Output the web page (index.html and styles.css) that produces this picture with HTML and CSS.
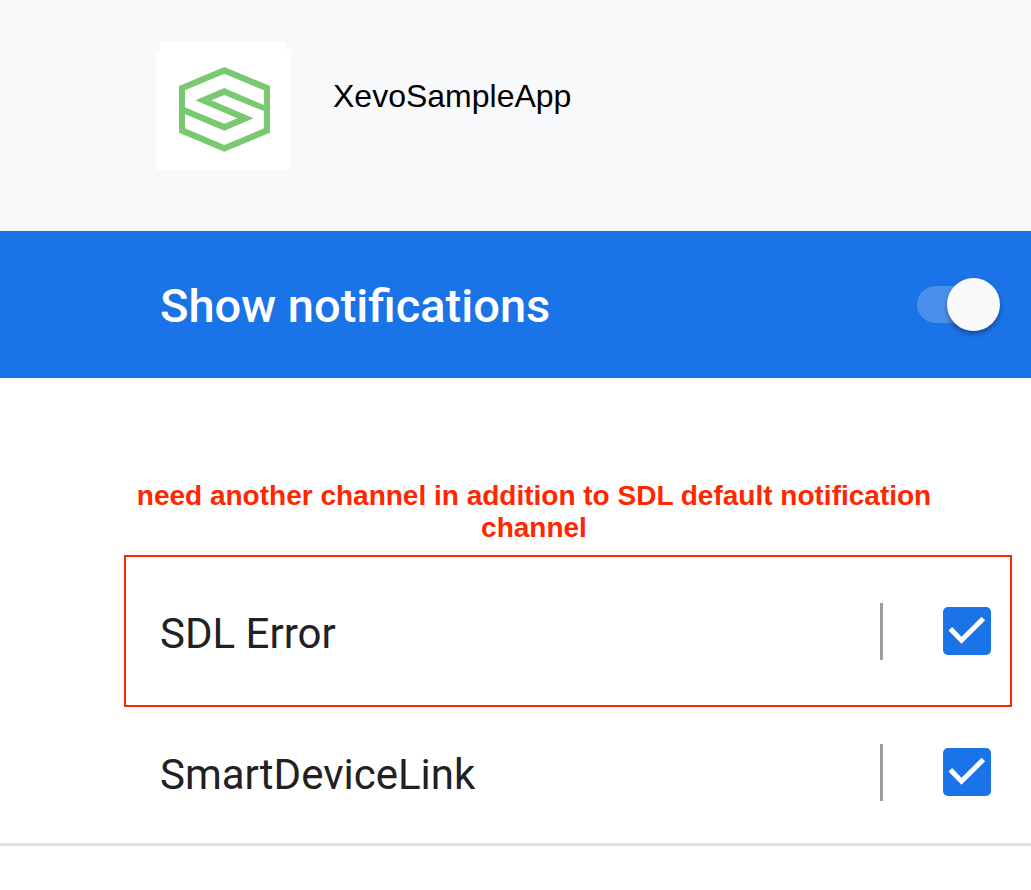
FILE: index.html
```html
<!DOCTYPE html>
<html lang="en">
<head>
<meta charset="utf-8">
<meta name="viewport" content="width=device-width, initial-scale=1">
<title>App notifications</title>
<link rel="stylesheet" href="styles.css">
</head>
<body>
<header class="app-header">
  <svg class="app-logo" viewBox="33 36 405 384" aria-hidden="true">
    <path fill="#fff" d="M45 36H423V60H438V420H33V60H45Z"/>
    <path fill="#78c970" fill-rule="evenodd" d="M238 111L375 168V308L238 365L102 308V168ZM238 131L120 181V295L238 345L357 295V181Z"/>
    <path fill="#78c970" d="M358 226L238 174L151 211L277 265L238 281L119 232V252L238 302L326 265L199 211L238 195L358 244Z"/>
  </svg>
  <h1 class="app-name">XevoSampleApp</h1>
</header>
<main>
  <div class="master">
    <label class="master-label" for="show">Show notifications</label>
    <input class="switch" id="show" type="checkbox" role="switch" checked>
  </div>
  <section class="channels">
    <p class="note">need another channel in addition to SDL default notification channel</p>
    <div class="channel highlighted">
      <label class="channel-label" for="sdl-error">SDL Error</label>
      <span class="divider"></span>
      <span class="check">
        <input class="check-input" id="sdl-error" type="checkbox" checked>
        <svg class="check-mark" viewBox="0 0 48 48" aria-hidden="true"><path fill="none" stroke="#fff" stroke-width="5" d="M7.3 21.8L18.5 33.2L40.4 11.5"/></svg>
      </span>
    </div>
    <div class="channel">
      <label class="channel-label" for="sdl">SmartDeviceLink</label>
      <span class="divider"></span>
      <span class="check">
        <input class="check-input" id="sdl" type="checkbox" checked>
        <svg class="check-mark" viewBox="0 0 48 48" aria-hidden="true"><path fill="none" stroke="#fff" stroke-width="5" d="M7.3 21.8L18.5 33.2L40.4 11.5"/></svg>
      </span>
    </div>
  </section>
</main>
</body>
</html>
```
FILE: styles.css
```css
* {
  box-sizing: border-box;
}

body {
  margin: 0;
  background: #fff;
  color: #212121;
  font-family: Roboto, sans-serif;
}

.app-header {
  display: flex;
  align-items: flex-start;
  gap: 42px;
  padding: 42px 32px 61px 156px;
  background: #f8f9fb;
}

.app-logo {
  flex: none;
  width: 135px;
  height: 128px;
}

.app-name {
  margin: 36px 0 0;
  color: #000;
  font: 400 32px/36px "Liberation Sans", Arial, sans-serif;
}

.master {
  display: flex;
  align-items: center;
  justify-content: space-between;
  padding: 46px 31px 47px 160px;
  background: #1b73e8;
}

.master-label {
  padding-top: 4px;
  color: #fff;
  font-size: 47px;
  font-weight: 500;
  line-height: 50px;
}

.switch {
  appearance: none;
  display: grid;
  align-items: center;
  width: 83px;
  height: 53px;
  margin: 0;
}

.switch::before,
.switch::after {
  content: "";
  grid-area: 1 / 1;
}

.switch::before {
  width: 72px;
  height: 37px;
  border-radius: 19px;
  background: #4990ed;
}

.switch::after {
  justify-self: end;
  width: 53px;
  height: 53px;
  border-radius: 50%;
  background: #fafafa;
  box-shadow: 0 3px 5px rgba(0, 0, 0, 0.35);
}

.channels {
  padding: 102px 19px 0 124px;
  border-bottom: 3px solid #e0e0e0;
}

.note {
  max-width: 820px;
  margin: 0 0 11px;
  color: #ff2600;
  font: 700 28px/32px "Arial Rounded MT Bold", "Liberation Sans", Arial, sans-serif;
  text-align: center;
}

.channel {
  display: flex;
  align-items: center;
  padding: 46px 19px 45px 34px;
  border: 2px solid transparent;
}

.channel + .channel {
  padding-top: 35px;
  padding-bottom: 40px;
}

.highlighted {
  border-color: #ff2600;
}

.channel-label {
  flex: 1;
  padding-top: 4px;
  font-size: 42px;
  line-height: 50px;
}

.divider {
  width: 3px;
  height: 57px;
  margin-right: 60px;
  background: #9e9e9e;
}

.check {
  display: grid;
  padding-bottom: 1px;
}

.check-input,
.check-mark {
  grid-area: 1 / 1;
  width: 48px;
  height: 48px;
  margin: 0;
}

.check-input {
  appearance: none;
  border-radius: 5px;
  background: #1b73e8;
}

.check-mark {
  pointer-events: none;
}
```
